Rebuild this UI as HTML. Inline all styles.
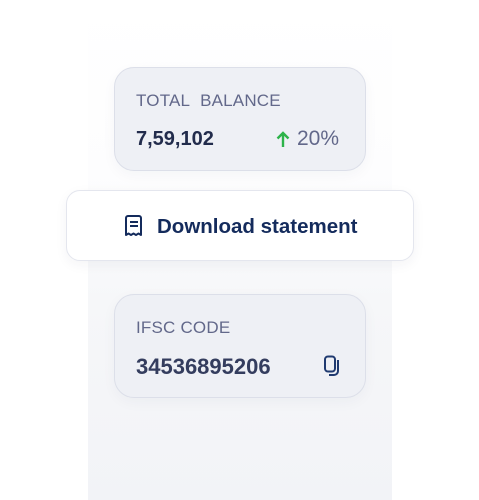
<!DOCTYPE html>
<html><head><style>
html,body{margin:0;padding:0;width:479px;height:500px;background:#fff;overflow:hidden;font-family:"Liberation Sans",sans-serif;position:relative}
.col{position:absolute;left:88px;top:0;width:304px;height:500px;background:linear-gradient(#fff 0%,#fdfdfe 35%,#f6f7f9 60%,#f2f3f7 100%)}
.card{position:absolute;left:114px;width:250px;height:102px;border:1px solid #dcdfe9;border-radius:20px;background:#eef0f5;box-shadow:0 4px 14px rgba(30,40,80,0.04)}
.lbl{position:absolute;left:21px;top:23px;font-size:17px;color:#62688a;letter-spacing:0.2px}
.val{position:absolute;left:21px;top:60px;font-size:20px;font-weight:bold;color:#222c4c}
.btn{position:absolute;left:66px;top:190px;width:346px;height:69px;background:#fff;border:1px solid #e4e6ee;border-radius:14px;box-shadow:0 4px 12px rgba(30,40,80,0.05)}
.btn span{position:absolute;left:90px;top:24px;font-size:20.5px;font-weight:bold;color:#142b5c}
</style></head><body>
<div class="col"></div>
<div class="card" style="top:67px">
 <div class="lbl">TOTAL&nbsp; BALANCE</div>
 <div class="val">7,59,102</div>
 <svg style="position:absolute;left:161px;top:63px" width="14" height="17" viewBox="0 0 14 17"><path d="M7 16V2M1.5 7.5L7 2l5.5 5.5" stroke="#2db34a" stroke-width="2.4" fill="none"/></svg>
 <div style="position:absolute;left:182px;top:59px;font-size:21px;color:#62688a">20%</div>
</div>
<div class="btn">
 <svg style="position:absolute;left:57px;top:24px" width="20" height="22" viewBox="0 0 20 22"><path d="M2 20V3a2 2 0 0 1 2-2h11a2 2 0 0 1 2 2v17l-2.5-1.5L12 20l-2.5-1.5L7 20l-2.5-1.5z" stroke="#142b5c" stroke-width="2" fill="none" stroke-linejoin="round"/><path d="M6 7h8M6 11h8" stroke="#142b5c" stroke-width="2"/></svg>
 <span>Download statement</span>
</div>
<div class="card" style="top:294px">
 <div class="lbl">IFSC CODE</div>
 <div class="val" style="font-size:22px;top:59px;color:#343d5e">34536895206</div>
 <svg style="position:absolute;left:208px;top:60px" width="20" height="22" viewBox="0 0 20 22"><rect x="2" y="1.5" width="10" height="15" rx="3" stroke="#1f3a70" stroke-width="2" fill="none"/><path d="M15 5v11a4 4 0 0 1-4 4H6" stroke="#1f3a70" stroke-width="2" fill="none"/></svg>
</div>
</body></html>
